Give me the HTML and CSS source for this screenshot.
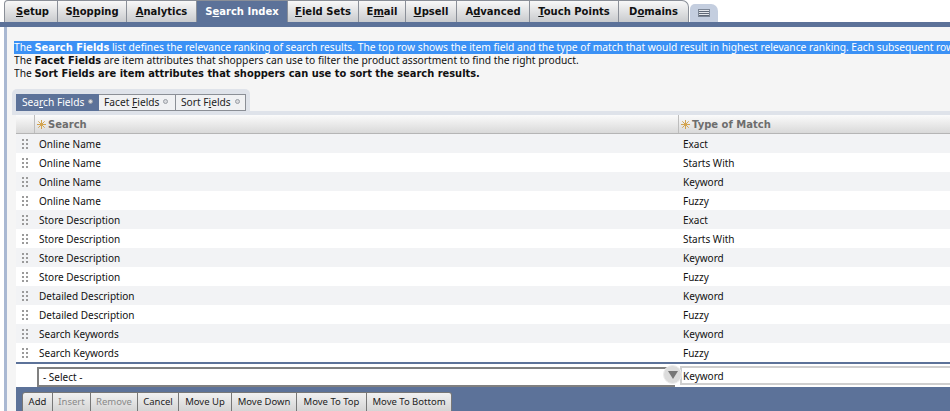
FILE: index.html
```html
<!DOCTYPE html>
<html lang="en">
<head>
    <meta charset="UTF-8">
    <title>Search Index</title>
    <link rel="stylesheet" href="styles.css">
</head>
<body>
    <div class="top-tabs">
        <a class="top-tab first"><span><u>S</u>etup</span></a>
        <a class="top-tab"><span>S<u>h</u>opping</span></a>
        <a class="top-tab"><span><u>A</u>nalytics</span></a>
        <a class="top-tab active"><span>S<u>e</u>arch Index</span></a>
        <a class="top-tab"><span><u>F</u>ield Sets</span></a>
        <a class="top-tab"><span>E<u>m</u>ail</span></a>
        <a class="top-tab"><span><u>U</u>psell</span></a>
        <a class="top-tab"><span>A<u>d</u>vanced</span></a>
        <a class="top-tab"><span><u>T</u>ouch Points</span></a>
        <a class="top-tab last"><span>D<u>o</u>mains</span></a>
        <a class="more-tab">
            <svg width="12" height="8" viewBox="0 0 12 8">
                <rect x="0.5" y="0.5" width="11" height="7" fill="#e4e7ec" stroke="#7d8796"/>
                <path d="M1 2.5H11M1 4.5H11M1 6.5H11" stroke="#5f6876" stroke-width="1"/>
            </svg>
        </a>
    </div>
    <div class="blue-bar"></div>

    <div class="panel">
        <div class="intro">
            <div class="line"><span class="selected">The <b>Search Fields</b> list defines the relevance ranking of search results. The top row shows the item field and the type of match that would result in highest relevance ranking. Each subsequent row shows the next highest relevance ranking.</span></div>
            <div class="line">The <b>Facet Fields</b> are item attributes that shoppers can use to filter the product assortment to find the right product.</div>
            <div class="line">The <b>Sort Fields are item attributes that shoppers can use to sort the search results.</b></div>
        </div>

        <div class="sub-tabs-wrap">
            <div class="sub-tabs">
                <a class="sub-tab active"><span>Sea<u>r</u>ch Fields</span><i class="dot"></i></a>
                <a class="sub-tab"><span>Facet <u>F</u>ields</span><i class="dot"></i></a>
                <a class="sub-tab"><span>Sort F<u>i</u>elds</span><i class="dot"></i></a>
            </div>
        </div>
        <div class="sub-tabs-rule"></div>

        <div class="grid">
            <div class="grid-head">
                <div class="col-drag"></div>
                <div class="col-search head-cell">
                    <svg class="star" width="9" height="9" viewBox="0 0 9 9"><path d="M4.5 0V9M0 4.5H9M1.3 1.3L7.7 7.7M7.7 1.3L1.3 7.7" stroke="#d3a450" stroke-width="1" fill="none"/></svg>
                    <span>Search</span>
                </div>
                <div class="col-type head-cell">
                    <svg class="star" width="9" height="9" viewBox="0 0 9 9"><path d="M4.5 0V9M0 4.5H9M1.3 1.3L7.7 7.7M7.7 1.3L1.3 7.7" stroke="#d3a450" stroke-width="1" fill="none"/></svg>
                    <span>Type of Match</span>
                </div>
            </div>
            <div class="grid-row"><div class="col-drag"><i class="grip"></i></div><div class="col-search">Online Name</div><div class="col-type">Exact</div></div>
            <div class="grid-row"><div class="col-drag"><i class="grip"></i></div><div class="col-search">Online Name</div><div class="col-type">Starts With</div></div>
            <div class="grid-row"><div class="col-drag"><i class="grip"></i></div><div class="col-search">Online Name</div><div class="col-type">Keyword</div></div>
            <div class="grid-row"><div class="col-drag"><i class="grip"></i></div><div class="col-search">Online Name</div><div class="col-type">Fuzzy</div></div>
            <div class="grid-row"><div class="col-drag"><i class="grip"></i></div><div class="col-search">Store Description</div><div class="col-type">Exact</div></div>
            <div class="grid-row"><div class="col-drag"><i class="grip"></i></div><div class="col-search">Store Description</div><div class="col-type">Starts With</div></div>
            <div class="grid-row"><div class="col-drag"><i class="grip"></i></div><div class="col-search">Store Description</div><div class="col-type">Keyword</div></div>
            <div class="grid-row"><div class="col-drag"><i class="grip"></i></div><div class="col-search">Store Description</div><div class="col-type">Fuzzy</div></div>
            <div class="grid-row"><div class="col-drag"><i class="grip"></i></div><div class="col-search">Detailed Description</div><div class="col-type">Keyword</div></div>
            <div class="grid-row"><div class="col-drag"><i class="grip"></i></div><div class="col-search">Detailed Description</div><div class="col-type">Fuzzy</div></div>
            <div class="grid-row"><div class="col-drag"><i class="grip"></i></div><div class="col-search">Search Keywords</div><div class="col-type">Keyword</div></div>
            <div class="grid-row"><div class="col-drag"><i class="grip"></i></div><div class="col-search">Search Keywords</div><div class="col-type">Fuzzy</div></div>

            <div class="edit-row">
                <div class="select-box">- Select -<span class="select-btn"><svg width="12" height="10" viewBox="0 0 12 10"><path d="M1 1H11L6 9Z" fill="#777"/></svg></span></div>
                <div class="type-box">Keyword</div>
            </div>
            <div class="button-bar">
                <button type="button" class="btn">Add</button>
                <button type="button" class="btn" disabled>Insert</button>
                <button type="button" class="btn" disabled>Remove</button>
                <button type="button" class="btn">Cancel</button>
                <button type="button" class="btn">Move Up</button>
                <button type="button" class="btn">Move Down</button>
                <button type="button" class="btn">Move To Top</button>
                <button type="button" class="btn">Move To Bottom</button>
            </div>
        </div>
    </div>
</body>
</html>
```

FILE: styles.css
```css
html, body {
    margin: 0;
    height: 411px;
    overflow: hidden;
    background: #fff;
}

body {
    font-family: "Noto Sans", "Open Sans", sans-serif;
    font-size: 10px;
    color: #111;
}

.top-tabs {
    display: flex;
    height: 22px;
    padding-left: 4px;
    align-items: stretch;
}

.top-tab {
    display: flex;
    align-items: center;
    justify-content: center;
    box-sizing: border-box;
    font-family: "DejaVu Sans", sans-serif;
    font-size: 10px;
    font-weight: bold;
    color: #111;
    background: linear-gradient(#f8f8f8, #c9cbce);
    border-top: 1px solid #8a8f98;
    border-right: 1px solid #8a8f98;
}

.top-tab:nth-child(1) { width: 54px; padding-left: 3px; border-left: 1px solid #8a8f98; }
.top-tab:nth-child(2) { width: 69px; }
.top-tab:nth-child(3) { width: 70px; }
.top-tab:nth-child(4) { width: 91px; }
.top-tab:nth-child(5) { width: 71px; }
.top-tab:nth-child(6) { width: 47px; }
.top-tab:nth-child(7) { width: 51px; }
.top-tab:nth-child(8) { width: 73px; }
.top-tab:nth-child(9) { width: 89px; }
.top-tab:nth-child(10) { width: 70px; }

.top-tab.active {
    background: #5c7299;
    color: #fff;
}

.top-tab.first {
    border-top-left-radius: 4px;
}

.top-tab.last {
    border-top-right-radius: 7px;
}

.more-tab {
    display: flex;
    align-items: center;
    justify-content: center;
    width: 28px;
    height: 18px;
    margin: 4px 0 0 1px;
    background: #c4cedf;
    border-top-left-radius: 5px;
    border-top-right-radius: 7px;
}

.blue-bar {
    height: 5px;
    background: #5c7299;
}

.panel {
    box-sizing: border-box;
    height: 384px;
    margin-left: 4px;
    padding-top: 14px;
    background: #f5f5f5;
    border-left: 3px solid #a9b8d2;
    overflow: hidden;
}

.intro {
    padding-left: 7px;
    height: 48px;
    font-size: 10.25px;
}

.intro b {
    font-family: "DejaVu Sans", sans-serif;
    font-size: 9.9px;
}

.line {
    height: 13px;
    line-height: 13px;
    white-space: nowrap;
    overflow: hidden;
}

.selected {
    background: #3b91f5;
    color: #fff;
}

.sub-tabs-wrap {
    box-sizing: border-box;
    width: 238px;
    height: 22px;
    margin-left: 5px;
    padding: 5px 0 0 4px;
    background: #dfe3ea;
    border-radius: 5px 5px 0 0;
}

.sub-tabs-rule {
    height: 4px;
    margin-left: 5px;
    background: #dfe3ea;
}

.sub-tabs {
    display: flex;
    height: 17px;
}

.sub-tab {
    display: flex;
    align-items: center;
    box-sizing: border-box;
    padding: 0 0 2px 5px;
    height: 17px;
    font-size: 10.2px;
    white-space: pre;
    background: #f0f1f3;
    border: 1px solid #8b8f96;
    border-left: 0;
    color: #222;
}

.sub-tab:nth-child(1) { width: 83px; border-left: 1px solid #5c7299; }
.sub-tab:nth-child(2) { width: 77px; }
.sub-tab:nth-child(3) { width: 70px; }

.sub-tab.active {
    background: #5c7299;
    border-color: #5c7299;
    color: #fff;
}

.dot {
    width: 3px;
    height: 3px;
    margin-left: 4px;
    border: 1px solid #9a9ea5;
    border-radius: 50%;
    background: #d8dade;
}

.grid {
    margin-left: 9px;
    background: #fff;
}

.grid-head,
.grid-row {
    display: flex;
}

.grid-head {
    box-sizing: border-box;
    height: 19px;
    background: linear-gradient(#fbfbfb, #d9d9d9);
    border-bottom: 1px solid #b5b5b5;
}

.col-drag {
    width: 18px;
    flex: none;
    display: flex;
    align-items: center;
    justify-content: center;
}

.col-search {
    width: 644px;
    flex: none;
    box-sizing: border-box;
    padding-left: 5px;
}

.col-type {
    flex: 1;
    box-sizing: border-box;
    padding-left: 5px;
}

.head-cell {
    display: flex;
    align-items: center;
    padding-left: 2px;
    font-family: "DejaVu Sans", sans-serif;
    font-size: 10px;
    font-weight: bold;
    color: #6d6d6d;
    border-left: 1px solid #bdbdbd;
    white-space: nowrap;
}

.col-type.head-cell {
    padding-left: 2px;
}

.star {
    flex: none;
    margin-right: 2px;
}

.grid-row {
    height: 19px;
    line-height: 21px;
    background: #fff;
}

.grid-row:nth-child(even) {
    background: #f2f3f5;
}

.grip {
    width: 6px;
    height: 10px;
    background-image: radial-gradient(circle at 1px 1px, #9b9b9b 1px, transparent 1px);
    background-size: 4px 4px;
}

.edit-row {
    box-sizing: border-box;
    display: flex;
    height: 25px;
    padding-top: 2px;
    background: #fff;
    border-top: 2px solid #5c7299;
    position: relative;
}

.select-box {
    box-sizing: border-box;
    width: 638px;
    height: 20px;
    margin: 1px 0 0 21px;
    padding-left: 4px;
    line-height: 16px;
    border: 2px solid #808080;
    border-right: 0;
}

.select-btn {
    position: absolute;
    left: 647px;
    top: 1px;
    display: flex;
    align-items: center;
    justify-content: center;
    width: 19px;
    height: 19px;
    border-radius: 50%;
    background: #dcdcdc;
    border: 1px solid #ececec;
    box-sizing: border-box;
}

.type-box {
    box-sizing: border-box;
    flex: 1;
    height: 19px;
    margin-left: 5px;
    padding-left: 1px;
    line-height: 17px;
    border: 2px solid #cfcfcf;
    border-right: 0;
}

.button-bar {
    display: flex;
    height: 24px;
    padding: 5px 0 0 6px;
    box-sizing: border-box;
    background: #5c7299;
}

.btn {
    height: 21px;
    padding: 0 0 2px;
    font-family: inherit;
    font-size: 9.5px;
    color: #222;
    background: linear-gradient(#f1f1f1, #d3d3d3);
    border: 1px solid #777;
    border-left: 0;
}

.btn:nth-child(1) { width: 31px; border-left: 1px solid #777; border-top-left-radius: 3px; }
.btn:nth-child(2) { width: 38px; }
.btn:nth-child(3) { width: 47px; }
.btn:nth-child(4) { width: 41px; }
.btn:nth-child(5) { width: 53px; }
.btn:nth-child(6) { width: 65px; }
.btn:nth-child(7) { width: 70px; }
.btn:nth-child(8) { width: 85px; border-top-right-radius: 3px; }

.btn:disabled {
    color: #888;
}
```
